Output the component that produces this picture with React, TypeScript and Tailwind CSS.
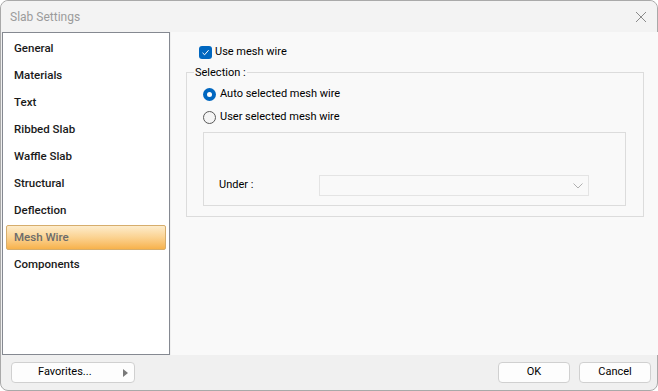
import { type ReactNode } from 'react'

const PAGES = [
  'General',
  'Materials',
  'Text',
  'Ribbed Slab',
  'Waffle Slab',
  'Structural',
  'Deflection',
  'Mesh Wire',
  'Components',
]

const SELECTED = 'Mesh Wire'

export default function App() {
  return (
    <div
      className="h-[391px] w-[658px] overflow-hidden bg-white text-[11px] text-black"
      style={{ fontFamily: '"Segoe UI", Roboto, "Noto Sans", sans-serif' }}
    >
      <div className="flex h-full w-full flex-col rounded-[8px] border border-[#a9a9a9] bg-[#f0f0f0]">
        {/* title bar */}
        <div className="flex h-[31px] shrink-0 items-center justify-between rounded-t-[8px] bg-[#f3f3f3] pl-[9px] pr-[8px]">
          <span className="text-[12px] text-[#9b9b9b]">Slab Settings</span>
          <svg width="12" height="12" viewBox="0 0 12 12" className="mr-[2px]">
            <path d="M1 1 L11 11 M11 1 L1 11" stroke="#8a8a8a" strokeWidth="1" fill="none" />
          </svg>
        </div>

        <div className="flex h-[323px] shrink-0">
          <div className="ml-[1px] w-[168px] shrink-0 border border-[#858991] bg-white pt-[2px] text-[11.5px]">
            {PAGES.map((page) => (
              <div key={page} className="h-[27px] px-[3px] py-[1px]">
                <div
                  className={`flex h-full items-center rounded-[2px] border pl-[7px] font-medium ${
                    page === SELECTED
                      ? 'border-[#d6ad6c] bg-gradient-to-b from-[#fdeccb] via-[#fbd290] to-[#f7b24a] text-[#6b6b6b]'
                      : 'border-transparent text-[#1a1a1a]'
                  }`}
                >
                  {page}
                </div>
              </div>
            ))}
          </div>

          <div className="ml-[1px] mr-[2px] flex-1 border-r border-[#e2e2e2] bg-[#f9f9f9] px-[15px]">
            <div className="mt-[14px] flex h-[13px] items-center pl-[13px]">
              <Checkbox />
              <span className="ml-[3px]">Use mesh wire</span>
            </div>

            <div className="relative mt-[13px] h-[145px] w-[458px] border border-[#dcdcdc] px-[16px] pt-[15px]">
              <span className="absolute -top-[7px] left-[7px] bg-[#f9f9f9] px-[1px] leading-[14px]">Selection :</span>

              <RadioRow checked>Auto selected mesh wire</RadioRow>
              <div className="mt-[10px]">
                <RadioRow>User selected mesh wire</RadioRow>
              </div>

              <div className="mt-[8px] h-[74px] w-[423px] border border-[#dcdcdc] pl-[15px] pt-[42px]">
                <div className="flex h-[21px] items-center">
                  <span className="w-[100px]">Under :</span>
                  <div className="flex h-[21px] w-[270px] items-center justify-end border border-[#e4e4e4] bg-[#f9f9f9] pr-[5px]">
                    <svg width="10" height="6" viewBox="0 0 10 6">
                      <path d="M0.5 0.5 L5 5 L9.5 0.5" stroke="#b0b0b0" strokeWidth="1" fill="none" />
                    </svg>
                  </div>
                </div>
              </div>
            </div>
          </div>
        </div>

        {/* bottom bar */}
        <div className="flex flex-1 items-center justify-between pl-[10px] pr-[6px]">
          <DialogButton className="w-[124px] justify-between pl-[26px] pr-[6px]">
            <span>Favorites...</span>
            <svg width="5" height="8" viewBox="0 0 5 8">
              <path d="M0 0 L5 4 L0 8 Z" fill="#7a7a7a" />
            </svg>
          </DialogButton>
          <div className="flex gap-[9px]">
            <DialogButton className="w-[72px] justify-center">OK</DialogButton>
            <DialogButton className="w-[72px] justify-center">Cancel</DialogButton>
          </div>
        </div>
      </div>
    </div>
  )
}

function Checkbox() {
  return (
    <div className="flex h-[13px] w-[13px] items-center justify-center rounded-[3px] bg-[#0067c0]">
      <svg width="9" height="9" viewBox="0 0 9 9">
        <path d="M1.5 4.8 L3.6 6.8 L7.6 2.2" stroke="white" strokeWidth="1" fill="none" />
      </svg>
    </div>
  )
}

function RadioRow({ checked = false, children }: { checked?: boolean; children: ReactNode }) {
  return (
    <div className="flex h-[13px] items-center">
      {checked ? (
        <div className="flex h-[13px] w-[13px] items-center justify-center rounded-full bg-[#0067c0]">
          <div className="h-[5px] w-[5px] rounded-full bg-white" />
        </div>
      ) : (
        <div className="h-[13px] w-[13px] rounded-full border border-[#5a5a5a] bg-[#f5f5f5]" />
      )}
      <span className="ml-[4px]">{children}</span>
    </div>
  )
}

function DialogButton({ className, children }: { className: string; children: ReactNode }) {
  return (
    <div
      className={`flex h-[21px] items-center rounded-[4px] border border-[#d0d0d0] bg-[#fdfdfd] ${className}`}
    >
      {children}
    </div>
  )
}
